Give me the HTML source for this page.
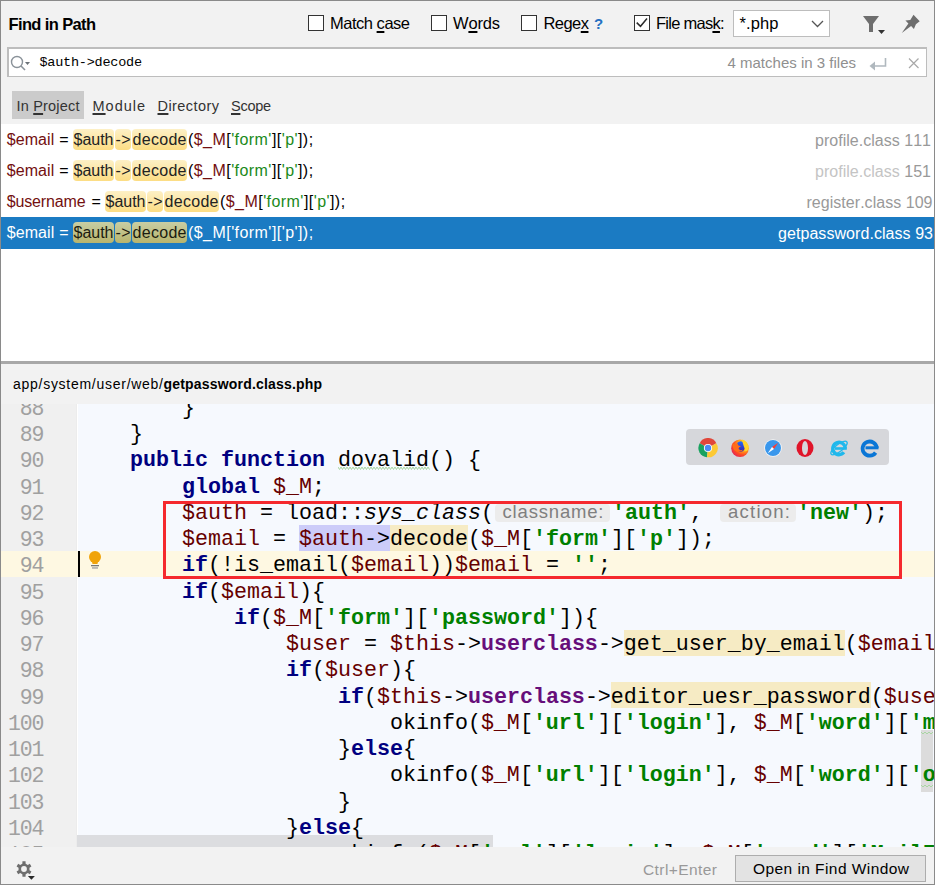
<!DOCTYPE html><html><head><meta charset="utf-8"><style>
html,body{margin:0;padding:0;}
body{width:935px;height:885px;overflow:hidden;position:relative;background:#f2f2f2;font-family:"Liberation Sans",sans-serif;font-kerning:none;}
.t{position:absolute;white-space:pre;font-kerning:none;}
.r{position:absolute;}
u{text-decoration:underline;text-decoration-thickness:2px;text-underline-offset:2px;}
.code{position:absolute;left:78px;white-space:pre;font-family:"Liberation Mono",monospace;font-size:21.6667px;font-kerning:none;}
.kw{color:#000080;font-weight:bold}
.v{color:#660000}
.s{color:#008000;font-weight:bold}
.f{color:#660e7a;font-weight:bold}
</style></head><body>
<div class="t" style="left:8.50px;top:15.00px;font-size:16.5px;line-height:18px;color:#000;font-weight:bold;letter-spacing:-0.628px;">Find in Path</div>
<div class="r" style="left:308px;top:15px;width:14px;height:14px;background:#fff;border:1px solid #333;"></div>
<div class="t" style="left:330.00px;top:14.00px;font-size:16.5px;line-height:18px;color:#000;letter-spacing:-0.485px;">Match <u>c</u>ase</div>
<div class="r" style="left:431px;top:15px;width:14px;height:14px;background:#fff;border:1px solid #333;"></div>
<div class="t" style="left:453.00px;top:14.00px;font-size:16.5px;line-height:18px;color:#000;letter-spacing:-0.168px;">W<u>o</u>rds</div>
<div class="r" style="left:521px;top:15px;width:14px;height:14px;background:#fff;border:1px solid #333;"></div>
<div class="t" style="left:543.50px;top:14.00px;font-size:16.5px;line-height:18px;color:#000;letter-spacing:-0.549px;">Rege<u>x</u></div>
<div class="t" style="left:594.00px;top:15.00px;font-size:15px;line-height:17px;color:#2470c2;font-weight:bold;">?</div>
<div class="r" style="left:634px;top:15px;width:14px;height:14px;background:#fff;border:1px solid #333;"></div>
<svg style="position:absolute;left:634px;top:15px" width="16" height="16"><path d="M2.7 7.6 L6.5 11.3 L13 3.6" fill="none" stroke="#2a2a2a" stroke-width="1.5"/></svg>
<div class="t" style="left:656.00px;top:14.00px;font-size:16.5px;line-height:18px;color:#000;letter-spacing:-0.742px;">File mas<u>k</u>:</div>
<div class="r" style="left:733px;top:10px;width:95px;height:25px;background:#fff;border:1px solid #bdbdbd;"></div>
<div class="t" style="left:739.50px;top:14.00px;font-size:16.5px;line-height:18px;color:#000;letter-spacing:0.116px;">*.php</div>
<svg style="position:absolute;left:810px;top:18px" width="16" height="12"><path d="M2 3 L7.5 8.5 L13 3" fill="none" stroke="#555" stroke-width="1.3"/></svg>
<svg style="position:absolute;left:860px;top:12px" width="30" height="26"><path d="M3 4 H19 L13 12 V20 H9 V12 Z" fill="#6e6e6e"/><path d="M18 18 H25 L21.5 22 Z" fill="#333"/></svg>
<svg style="position:absolute;left:900px;top:12px" width="24" height="24"><path fill="#6e6e6e" d="M13.5 2.8 L19.7 9.2 L15.9 12.3 L13.9 17 L11.1 14 L1.8 21 L8.4 11.6 L5.4 8.4 L10.3 7.9 Z"/></svg>
<div class="r" style="left:7px;top:47px;width:917px;height:27px;background:#fff;border:2px solid #bdbdbd;border-bottom-width:1px;border-right-width:1px;"></div>
<svg style="position:absolute;left:8px;top:53px" width="24" height="20"><circle cx="9" cy="9" r="5.5" fill="none" stroke="#8a9299" stroke-width="1.4"/><path d="M13 13 L17 17" stroke="#8a9299" stroke-width="1.6"/><path d="M17 9 H22 L19.5 12 Z" fill="#6b7278"/></svg>
<div class="t" style="left:39.50px;top:55.00px;font-size:13.5px;line-height:15px;color:#000;font-family:'Liberation Mono',monospace;letter-spacing:-0.235px;">$auth-&gt;decode</div>
<div class="t" style="left:727.50px;top:54.00px;font-size:15px;line-height:17px;color:#8f8f8f;letter-spacing:0.006px;">4 matches in 3 files</div>
<svg style="position:absolute;left:868px;top:55px" width="22" height="18"><path d="M17.5 3 V11 H5" fill="none" stroke="#b0b8be" stroke-width="1.6"/><path d="M1.5 11 L7 6.5 V15.5 Z" fill="#b0b8be"/></svg>
<svg style="position:absolute;left:906px;top:55px" width="16" height="16"><path d="M3 3.5 L12.5 13 M12.5 3.5 L3 13" stroke="#a8a8a8" stroke-width="1.2"/></svg>
<div class="r" style="left:12px;top:91px;width:72px;height:28px;background:#cbcbcb;"></div>
<div class="t" style="left:16.50px;top:98.00px;font-size:14.5px;line-height:16px;color:#333;letter-spacing:0.194px;">In <u>P</u>roject</div>
<div class="t" style="left:92.50px;top:98.00px;font-size:14.5px;line-height:16px;color:#333;letter-spacing:0.989px;"><u>M</u>odule</div>
<div class="t" style="left:157.50px;top:98.00px;font-size:14.5px;line-height:16px;color:#333;letter-spacing:0.437px;"><u>D</u>irectory</div>
<div class="t" style="left:231.00px;top:98.00px;font-size:14.5px;line-height:16px;color:#333;letter-spacing:-0.279px;"><u>S</u>cope</div>
<div class="r" style="left:1px;top:124px;width:933px;height:237px;background:#fff;"></div>
<div class="r" style="left:1px;top:217px;width:933px;height:32px;background:#1b7bc3;"></div>
<div class="t" style="left:6.70px;top:131.00px;font-size:16px;line-height:17px;color:#730f0f;letter-spacing:0.073px;">$email</div>
<div class="t" style="left:59.20px;top:131.00px;font-size:16px;line-height:17px;color:#000;">=</div>
<div class="r" style="left:73px;top:129px;width:41px;height:21px;background:linear-gradient(#fdf0c6,#fcdd84);border-radius:4px;"></div>
<div class="r" style="left:115px;top:129px;width:16px;height:21px;background:linear-gradient(#fdf0c6,#fcdd84);border-radius:4px;"></div>
<div class="r" style="left:132px;top:129px;width:55px;height:21px;background:linear-gradient(#fdf0c6,#fcdd84);border-radius:4px;"></div>
<div class="t" style="left:73.50px;top:131.00px;font-size:16px;line-height:17px;color:#222;letter-spacing:-0.010px;">$auth</div>
<div class="t" style="left:115.50px;top:131.00px;font-size:16px;line-height:17px;color:#222;letter-spacing:0.328px;">-&gt;</div>
<div class="t" style="left:132.50px;top:131.00px;font-size:16px;line-height:17px;color:#222;letter-spacing:0.302px;">decode</div>
<div class="t" style="left:188.00px;top:131.00px;font-size:16px;line-height:17px;letter-spacing:0.438px;"><span style="color:#000">(</span><span style="color:#730f0f">$_M</span><span style="color:#000">[</span><span style="color:#1a8a1a">'form'</span><span style="color:#000">][</span><span style="color:#1a8a1a">'p'</span><span style="color:#000">]);</span></div>
<div class="t" style="left:6.70px;top:162.00px;font-size:16px;line-height:17px;color:#730f0f;letter-spacing:0.073px;">$email</div>
<div class="t" style="left:59.20px;top:162.00px;font-size:16px;line-height:17px;color:#000;">=</div>
<div class="r" style="left:73px;top:160px;width:41px;height:21px;background:linear-gradient(#fdf0c6,#fcdd84);border-radius:4px;"></div>
<div class="r" style="left:115px;top:160px;width:16px;height:21px;background:linear-gradient(#fdf0c6,#fcdd84);border-radius:4px;"></div>
<div class="r" style="left:132px;top:160px;width:55px;height:21px;background:linear-gradient(#fdf0c6,#fcdd84);border-radius:4px;"></div>
<div class="t" style="left:73.50px;top:162.00px;font-size:16px;line-height:17px;color:#222;letter-spacing:-0.010px;">$auth</div>
<div class="t" style="left:115.50px;top:162.00px;font-size:16px;line-height:17px;color:#222;letter-spacing:0.328px;">-&gt;</div>
<div class="t" style="left:132.50px;top:162.00px;font-size:16px;line-height:17px;color:#222;letter-spacing:0.302px;">decode</div>
<div class="t" style="left:188.00px;top:162.00px;font-size:16px;line-height:17px;letter-spacing:0.438px;"><span style="color:#000">(</span><span style="color:#730f0f">$_M</span><span style="color:#000">[</span><span style="color:#1a8a1a">'form'</span><span style="color:#000">][</span><span style="color:#1a8a1a">'p'</span><span style="color:#000">]);</span></div>
<div class="t" style="left:6.70px;top:193.00px;font-size:16px;line-height:17px;color:#730f0f;letter-spacing:-0.131px;">$username</div>
<div class="t" style="left:91.50px;top:193.00px;font-size:16px;line-height:17px;color:#000;">=</div>
<div class="r" style="left:105px;top:191px;width:41px;height:21px;background:linear-gradient(#fdf0c6,#fcdd84);border-radius:4px;"></div>
<div class="r" style="left:147px;top:191px;width:16px;height:21px;background:linear-gradient(#fdf0c6,#fcdd84);border-radius:4px;"></div>
<div class="r" style="left:164px;top:191px;width:55px;height:21px;background:linear-gradient(#fdf0c6,#fcdd84);border-radius:4px;"></div>
<div class="t" style="left:105.50px;top:193.00px;font-size:16px;line-height:17px;color:#222;letter-spacing:-0.010px;">$auth</div>
<div class="t" style="left:147.50px;top:193.00px;font-size:16px;line-height:17px;color:#222;letter-spacing:0.328px;">-&gt;</div>
<div class="t" style="left:164.50px;top:193.00px;font-size:16px;line-height:17px;color:#222;letter-spacing:0.302px;">decode</div>
<div class="t" style="left:220.00px;top:193.00px;font-size:16px;line-height:17px;letter-spacing:0.438px;"><span style="color:#000">(</span><span style="color:#730f0f">$_M</span><span style="color:#000">[</span><span style="color:#1a8a1a">'form'</span><span style="color:#000">][</span><span style="color:#1a8a1a">'p'</span><span style="color:#000">]);</span></div>
<div class="t" style="left:6.70px;top:224.00px;font-size:16px;line-height:17px;color:#fff;letter-spacing:0.073px;">$email</div>
<div class="t" style="left:59.20px;top:224.00px;font-size:16px;line-height:17px;color:#fff;">=</div>
<div class="r" style="left:73px;top:222px;width:41px;height:21px;background:linear-gradient(#c8cea4,#b8b46c);border-radius:4px;"></div>
<div class="r" style="left:115px;top:222px;width:16px;height:21px;background:linear-gradient(#c8cea4,#b8b46c);border-radius:4px;"></div>
<div class="r" style="left:132px;top:222px;width:55px;height:21px;background:linear-gradient(#c8cea4,#b8b46c);border-radius:4px;"></div>
<div class="t" style="left:73.50px;top:224.00px;font-size:16px;line-height:17px;color:#1c1c10;letter-spacing:-0.010px;">$auth</div>
<div class="t" style="left:115.50px;top:224.00px;font-size:16px;line-height:17px;color:#1c1c10;letter-spacing:0.328px;">-&gt;</div>
<div class="t" style="left:132.50px;top:224.00px;font-size:16px;line-height:17px;color:#1c1c10;letter-spacing:0.302px;">decode</div>
<div class="t" style="left:188.00px;top:224.00px;font-size:16px;line-height:17px;letter-spacing:0.438px;"><span style="color:#fff">(</span><span style="color:#fff">$_M</span><span style="color:#fff">[</span><span style="color:#fff">'form'</span><span style="color:#fff">][</span><span style="color:#fff">'p'</span><span style="color:#fff">]);</span></div>
<div class="t" style="left:815.00px;top:132.00px;font-size:16px;line-height:17px;letter-spacing:0.024px;"><span style="color:#999">profile.class 111</span></div>
<div class="t" style="left:815.00px;top:163.00px;font-size:16px;line-height:17px;letter-spacing:0.024px;"><span style="color:#c4c4c4">profile.class </span><span style="color:#999">151</span></div>
<div class="t" style="left:806.50px;top:194.00px;font-size:16px;line-height:17px;letter-spacing:0.036px;"><span style="color:#999">register.class 109</span></div>
<div class="t" style="left:778.00px;top:225.00px;font-size:16px;line-height:17px;letter-spacing:0.060px;"><span style="color:#fff">getpassword.class 93</span></div>
<div class="r" style="left:1px;top:361px;width:933px;height:3px;background:#a8a8a8;"></div>
<div class="t" style="left:13.00px;top:376.00px;font-size:14px;line-height:16px;letter-spacing:0.728px;"><span style="color:#000">app/system/user/web/</span></div>
<div class="t" style="left:163.50px;top:376.00px;font-size:14px;line-height:16px;color:#000;font-weight:bold;letter-spacing:0.184px;">getpassword.class.php</div>
<div style="position:absolute;left:0;top:0;width:935px;height:885px;clip-path:inset(404px 0 38px 0)">
<div class="r" style="left:1px;top:404px;width:75px;height:443px;background:#f0f0f0;"></div>
<div class="r" style="left:76px;top:404px;width:1px;height:443px;background:#ececec;"></div>
<div class="r" style="left:77px;top:404px;width:1px;height:443px;background:#ffffff;"></div>
<div class="r" style="left:78px;top:404px;width:856px;height:443px;background:#f6f9fe;"></div>
<div class="r" style="left:1px;top:551px;width:933px;height:26px;background:#fef8e2;"></div>
<div class="r" style="left:921px;top:730px;width:12px;height:62px;background:#dcdcdc;"></div>
<svg style="position:absolute;left:921px;top:731px" width="13" height="4"><path d="M0 1 L2 3 L4 1 L6 3 L8 1 L10 3 L12 1" fill="none" stroke="#a9d6a3" stroke-width="1"/></svg>
<svg style="position:absolute;left:921px;top:784px" width="13" height="4"><path d="M0 1 L2 3 L4 1 L6 3 L8 1 L10 3 L12 1" fill="none" stroke="#a9d6a3" stroke-width="1"/></svg>
<div class="r" style="left:77px;top:835px;width:416px;height:12px;background:#dcdde0;"></div>
<div class="t" style="left:19.80px;top:396.75px;font-size:21.5px;line-height:24px;letter-spacing:-1.204px;font-family:'Liberation Mono',monospace;"><span style="color:#a0a0a0">88</span></div>
<div class="t" style="left:19.80px;top:423.00px;font-size:21.5px;line-height:24px;letter-spacing:-1.204px;font-family:'Liberation Mono',monospace;"><span style="color:#a0a0a0">89</span></div>
<div class="t" style="left:19.80px;top:449.25px;font-size:21.5px;line-height:24px;letter-spacing:-1.204px;font-family:'Liberation Mono',monospace;"><span style="color:#a0a0a0">90</span></div>
<div class="t" style="left:19.80px;top:475.50px;font-size:21.5px;line-height:24px;letter-spacing:-1.204px;font-family:'Liberation Mono',monospace;"><span style="color:#a0a0a0">91</span></div>
<div class="t" style="left:19.80px;top:501.75px;font-size:21.5px;line-height:24px;letter-spacing:-1.204px;font-family:'Liberation Mono',monospace;"><span style="color:#a0a0a0">92</span></div>
<div class="t" style="left:19.80px;top:528.00px;font-size:21.5px;line-height:24px;letter-spacing:-1.204px;font-family:'Liberation Mono',monospace;"><span style="color:#a0a0a0">93</span></div>
<div class="t" style="left:19.80px;top:554.25px;font-size:21.5px;line-height:24px;letter-spacing:-1.204px;font-family:'Liberation Mono',monospace;"><span style="color:#a0a0a0">94</span></div>
<div class="t" style="left:19.80px;top:580.50px;font-size:21.5px;line-height:24px;letter-spacing:-1.204px;font-family:'Liberation Mono',monospace;"><span style="color:#a0a0a0">95</span></div>
<div class="t" style="left:19.80px;top:606.75px;font-size:21.5px;line-height:24px;letter-spacing:-1.204px;font-family:'Liberation Mono',monospace;"><span style="color:#a0a0a0">96</span></div>
<div class="t" style="left:19.80px;top:633.00px;font-size:21.5px;line-height:24px;letter-spacing:-1.204px;font-family:'Liberation Mono',monospace;"><span style="color:#a0a0a0">97</span></div>
<div class="t" style="left:19.80px;top:659.25px;font-size:21.5px;line-height:24px;letter-spacing:-1.204px;font-family:'Liberation Mono',monospace;"><span style="color:#a0a0a0">98</span></div>
<div class="t" style="left:19.80px;top:685.50px;font-size:21.5px;line-height:24px;letter-spacing:-1.204px;font-family:'Liberation Mono',monospace;"><span style="color:#a0a0a0">99</span></div>
<div class="t" style="left:8.10px;top:711.75px;font-size:21.5px;line-height:24px;letter-spacing:-1.203px;font-family:'Liberation Mono',monospace;"><span style="color:#a0a0a0">100</span></div>
<div class="t" style="left:8.10px;top:738.00px;font-size:21.5px;line-height:24px;letter-spacing:-1.203px;font-family:'Liberation Mono',monospace;"><span style="color:#a0a0a0">101</span></div>
<div class="t" style="left:8.10px;top:764.25px;font-size:21.5px;line-height:24px;letter-spacing:-1.203px;font-family:'Liberation Mono',monospace;"><span style="color:#a0a0a0">102</span></div>
<div class="t" style="left:8.10px;top:790.50px;font-size:21.5px;line-height:24px;letter-spacing:-1.203px;font-family:'Liberation Mono',monospace;"><span style="color:#a0a0a0">103</span></div>
<div class="t" style="left:8.10px;top:816.75px;font-size:21.5px;line-height:24px;letter-spacing:-1.203px;font-family:'Liberation Mono',monospace;"><span style="color:#a0a0a0">104</span></div>
<div class="t" style="left:8.10px;top:843.00px;font-size:21.5px;line-height:24px;letter-spacing:-1.203px;font-family:'Liberation Mono',monospace;"><span style="color:#a0a0a0">105</span></div>
<div class="r" style="left:299px;top:525px;width:91px;height:26px;background:#ccccf9;"></div>
<div class="r" style="left:390px;top:525px;width:78px;height:26px;background:#f6ebc4;"></div>
<div class="r" style="left:624px;top:630px;width:221px;height:26px;background:#f6ebc4;"></div>
<div class="r" style="left:611px;top:682px;width:260px;height:26px;background:#f6ebc4;"></div>
<div class="code" style="top:395.75px;line-height:25px">        }</div>
<div class="code" style="top:422.00px;line-height:25px">    }</div>
<div class="code" style="top:448.25px;line-height:25px"><span class="kw">    public</span> <span class="kw">function</span> dovalid() {</div>
<div class="code" style="top:474.50px;line-height:25px"><span class="kw">        global</span> <span class="v">$_M</span>;</div>
<div class="code" style="top:527.00px;line-height:25px">        <span class="v">$email</span> = <span class="v">$auth</span>-&gt;decode(<span class="v">$_M</span>[<span class="s">'form'</span>][<span class="s">'p'</span>]);</div>
<div class="code" style="top:553.25px;line-height:25px">        <span class="kw">if</span>(!is_email(<span class="v">$email</span>))<span class="v">$email</span> = <span class="s">''</span>;</div>
<div class="code" style="top:579.50px;line-height:25px">        <span class="kw">if</span>(<span class="v">$email</span>){</div>
<div class="code" style="top:605.75px;line-height:25px">            <span class="kw">if</span>(<span class="v">$_M</span>[<span class="s">'form'</span>][<span class="s">'password'</span>]){</div>
<div class="code" style="top:632.00px;line-height:25px">                <span class="v">$user</span> = <span class="v">$this</span>-&gt;<span class="f">userclass</span>-&gt;get_user_by_email(<span class="v">$email</span></div>
<div class="code" style="top:658.25px;line-height:25px">                <span class="kw">if</span>(<span class="v">$user</span>){</div>
<div class="code" style="top:684.50px;line-height:25px">                    <span class="kw">if</span>(<span class="v">$this</span>-&gt;<span class="f">userclass</span>-&gt;editor_uesr_password(<span class="v">$use</span></div>
<div class="code" style="top:710.75px;line-height:25px">                        okinfo(<span class="v">$_M</span>[<span class="s">'url'</span>][<span class="s">'login'</span>], <span class="v">$_M</span>[<span class="s">'word'</span>][<span class="s">'m</span></div>
<div class="code" style="top:737.00px;line-height:25px">                    }<span class="kw">else</span>{</div>
<div class="code" style="top:763.25px;line-height:25px">                        okinfo(<span class="v">$_M</span>[<span class="s">'url'</span>][<span class="s">'login'</span>], <span class="v">$_M</span>[<span class="s">'word'</span>][<span class="s">'o</span></div>
<div class="code" style="top:789.50px;line-height:25px">                    }</div>
<div class="code" style="top:815.75px;line-height:25px">                }<span class="kw">else</span>{</div>
<div class="code" style="top:842.00px;line-height:25px">                    okinfo(<span class="v">$_M</span>[<span class="s">'url'</span>][<span class="s">'login'</span>], <span class="v">$_M</span>[<span class="s">'word'</span>][<span class="s">'MailInfo'</span></div>
<div class="code" style="top:500.75px;line-height:25px">        <span class="v">$auth</span> = load::<i>sys_class</i>(</div>
<div class="code" style="left:612px;top:500.75px;line-height:25px"><span class="s">'auth'</span>, </div>
<div class="code" style="left:797px;top:500.75px;line-height:25px"><span class="s">'new'</span>);</div>
<div class="r" style="left:495px;top:504px;width:115px;height:18px;background:#ececec;border-radius:4px;"></div>
<div class="r" style="left:720px;top:504px;width:76px;height:18px;background:#ececec;border-radius:4px;"></div>
<div class="t" style="left:502.50px;top:501.00px;font-size:18.5px;line-height:21px;letter-spacing:0.826px;"><span style="color:#7f7f7f">classname:</span></div>
<div class="t" style="left:728.00px;top:501.00px;font-size:18.5px;line-height:21px;letter-spacing:1.249px;"><span style="color:#7f7f7f">action:</span></div>
<svg style="position:absolute;left:338px;top:466px" width="92" height="5"><path d="M0.0 1L1.5 3.5L3.0 1L4.5 3.5L6.0 1L7.5 3.5L9.0 1L10.5 3.5L12.0 1L13.5 3.5L15.0 1L16.5 3.5L18.0 1L19.5 3.5L21.0 1L22.5 3.5L24.0 1L25.5 3.5L27.0 1L28.5 3.5L30.0 1L31.5 3.5L33.0 1L34.5 3.5L36.0 1L37.5 3.5L39.0 1L40.5 3.5L42.0 1L43.5 3.5L45.0 1L46.5 3.5L48.0 1L49.5 3.5L51.0 1L52.5 3.5L54.0 1L55.5 3.5L57.0 1L58.5 3.5L60.0 1L61.5 3.5L63.0 1L64.5 3.5L66.0 1L67.5 3.5L69.0 1L70.5 3.5L72.0 1L73.5 3.5L75.0 1L76.5 3.5L78.0 1L79.5 3.5L81.0 1L82.5 3.5L84.0 1L85.5 3.5L87.0 1L88.5 3.5L90.0 1L91.5 3.5" fill="none" stroke="#a9d6a3" stroke-width="1"/></svg>
<div class="r" style="left:163px;top:501px;width:733px;height:72px;background:transparent;border:3px solid #f5292e;"></div>
<div class="r" style="left:78px;top:551px;width:2px;height:26px;background:#000;"></div>
<svg style="position:absolute;left:86px;top:549px" width="18" height="22"><circle cx="9" cy="8" r="6" fill="#f0a30a"/><path d="M5.5 10 L6.5 15 H11.5 L12.5 10 Z" fill="#f0a30a"/><rect x="5" y="16" width="8" height="1.3" fill="#777"/><rect x="6" y="18.2" width="6" height="1.5" fill="#aaa"/></svg>
<div class="r" style="left:686px;top:429px;width:203px;height:36px;background:#d6d7db;border-radius:4px;"></div>

<svg style="position:absolute;left:698px;top:438px" width="20" height="20" viewBox="0 0 20 20">
 <path d="M10 10 L18.3 5.2 A9.2 9.2 0 0 0 1.7 5.2 Z" fill="#e0463a"/>
 <path d="M10 10 L1.7 5.2 A9.2 9.2 0 0 0 9 19.2 Z" fill="#1aa260"/>
 <path d="M10 10 L9 19.2 A9.2 9.2 0 0 0 18.3 5.2 Z" fill="#fcc934"/>
 <circle cx="10" cy="10" r="4.1" fill="#fff"/><circle cx="10" cy="10" r="3.2" fill="#4a8af4"/>
</svg>
<svg style="position:absolute;left:730px;top:438px" width="20" height="20" viewBox="0 0 20 20">
 <defs><radialGradient id="ffg" cx="0.72" cy="0.3" r="0.9"><stop offset="0" stop-color="#ffe83a"/><stop offset="0.35" stop-color="#ffb21a"/><stop offset="0.65" stop-color="#ff4a22"/><stop offset="1" stop-color="#d9186a"/></radialGradient>
 <linearGradient id="ffb" x1="0" y1="0" x2="0" y2="1"><stop offset="0" stop-color="#1e6bff"/><stop offset="1" stop-color="#3a22a8"/></linearGradient></defs>
 <circle cx="10" cy="10.2" r="8.8" fill="url(#ffg)"/>
 <ellipse cx="10.6" cy="8.6" rx="4.4" ry="5.3" fill="url(#ffb)"/>
 <path d="M2.2 5.2 L5 6.5 L7.3 5.2 L8.5 7.5 L11 8.2 L9 9.5 L8.6 11 L10.5 12.2 L13 11.8 L11.5 13.6 L7 13.8 L4 12 L2.5 8.5 Z" fill="#ff6d1a"/>
 <path d="M12 1.6 Q17.8 3.2 18.6 9.5 Q18.2 14 14.2 13.2 Q15.6 10.5 13.8 8.2 Q12.8 6 12 1.6 Z" fill="#ffd52e"/>
</svg>
<svg style="position:absolute;left:763px;top:438px" width="20" height="20" viewBox="0 0 20 20">
 <circle cx="10" cy="10" r="8.8" fill="#f4f6f8"/><circle cx="10" cy="10" r="8" fill="#3a97ec"/>
 <path d="M15.2 4.8 L11 11 L9 9 Z" fill="#ff3b30"/><path d="M4.8 15.2 L9 9 L11 11 Z" fill="#fff"/>
</svg>
<svg style="position:absolute;left:795px;top:438px" width="20" height="20" viewBox="0 0 20 20">
 <ellipse cx="10" cy="10" rx="8.5" ry="9" fill="#e0152a"/><ellipse cx="10" cy="10" rx="3" ry="6.9" fill="#d6d7db"/>
</svg>
<svg style="position:absolute;left:829px;top:438px" width="20" height="20" viewBox="0 0 20 20">
 <path d="M16.2 10.5 A6.2 6.2 0 1 0 14.9 14.3" fill="none" stroke="#20b8ec" stroke-width="3.4"/>
 <rect x="6" y="9.2" width="11.8" height="2.6" fill="#20b8ec"/>
 <ellipse cx="10" cy="10" rx="10" ry="3.6" transform="rotate(-38 10 10)" fill="none" stroke="#20b8ec" stroke-width="1.3"/>
</svg>
<svg style="position:absolute;left:860px;top:437px" width="20" height="21" viewBox="0 0 20 21">
 <path d="M16.8 11 A7.1 7.1 0 1 0 15.6 15.6" fill="none" stroke="#0a76d6" stroke-width="3.8"/>
 <rect x="5.5" y="9.3" width="13" height="3" fill="#0a76d6"/>
</svg>

</div>
<div class="r" style="left:1px;top:847px;width:933px;height:37px;background:#f2f2f2;"></div>
<svg style="position:absolute;left:14px;top:859px" width="26" height="26" viewBox="0 0 26 26"><path fill="#6e6e6e" fill-rule="evenodd" d="M8.35 4.65 L8.45 2.36 L11.55 2.36 L11.65 4.65 L13.81 5.89 L15.85 4.84 L17.40 7.52 L15.46 8.76 L15.46 11.24 L17.40 12.48 L15.85 15.16 L13.81 14.11 L11.65 15.35 L11.55 17.64 L8.45 17.64 L8.35 15.35 L6.19 14.11 L4.15 15.16 L2.60 12.48 L4.54 11.24 L4.54 8.76 L2.60 7.52 L4.15 4.84 L6.19 5.89 Z M12.90 10 A2.9 2.9 0 1 0 7.10 10 A2.9 2.9 0 1 0 12.90 10 Z"/><path d="M13.9 17 H20.9 L17.4 20.8 Z" fill="#2a2a2a"/></svg>
<div class="t" style="left:643.00px;top:861.00px;font-size:15.5px;line-height:17px;color:#999;letter-spacing:0.422px;">Ctrl+Enter</div>
<div class="r" style="left:735px;top:855px;width:189px;height:25px;background:#e3e3e3;border:1px solid #adadad;"></div>
<div class="t" style="left:753.00px;top:860.00px;font-size:15.5px;line-height:17px;color:#000;letter-spacing:0.434px;">Open in Find Window</div>
<div class="r" style="left:0px;top:0px;width:935px;height:1px;background:#8a8a8a;"></div>
<div class="r" style="left:0px;top:0px;width:1px;height:885px;background:#8a8a8a;"></div>
<div class="r" style="left:934px;top:0px;width:1px;height:885px;background:#8a8a8a;"></div>
<div class="r" style="left:0px;top:884px;width:935px;height:1px;background:#8a8a8a;"></div>
</body></html>
